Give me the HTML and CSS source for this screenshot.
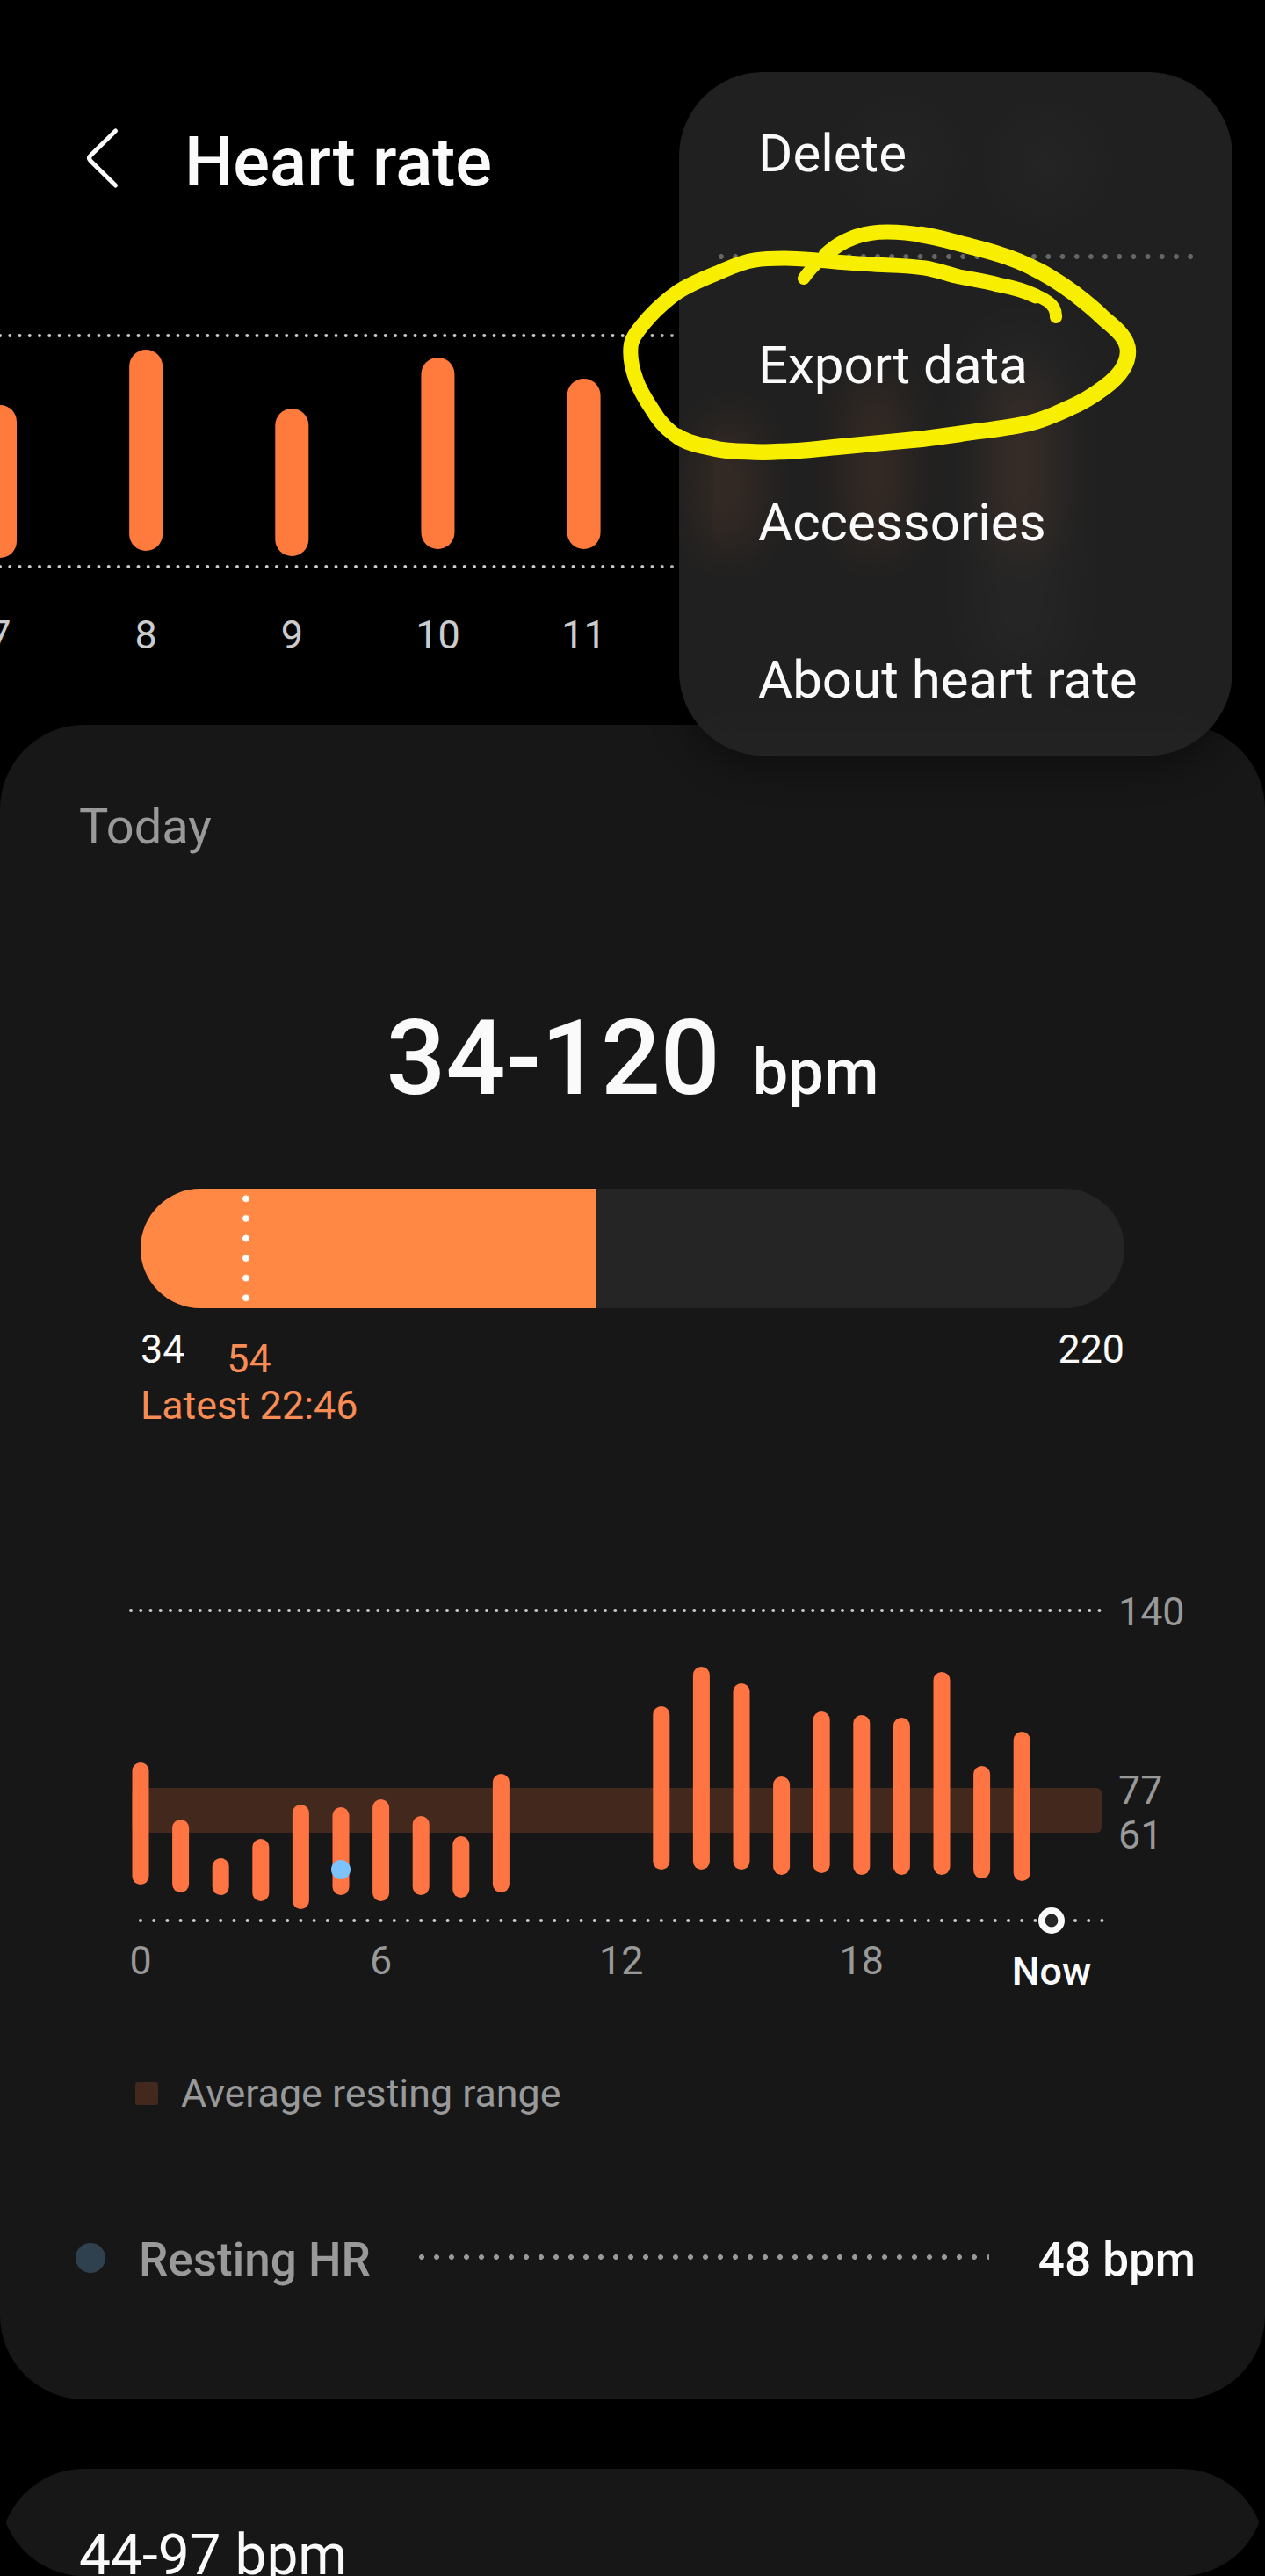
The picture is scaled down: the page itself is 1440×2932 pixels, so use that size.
FILE: index.html
```html
<!DOCTYPE html>
<html lang="en">
<head>
  <meta charset="UTF-8">
  <title>Heart rate</title>
  <link rel="stylesheet" href="styles.css">
</head>
<body>

  <div class="screen">
    <header class="header">
      <svg class="back" width="48" height="92" viewBox="0 0 48 92">
        <path d="M39.5 11 L11 39 Q8 42 11 45 L39.5 73" />
      </svg>
      <h1>Heart rate</h1>
    </header>

    <svg class="week" id="week" width="1440" height="485" viewBox="0 0 1440 485">
      <rect class="selected-day" x="1108" y="30" width="110" height="400" rx="55" />
      <line class="dots" x1="0" y1="42" x2="768" y2="42" />
      <line class="dots" x1="0" y1="305" x2="768" y2="305" />
    </svg>

    <section class="card">
      <div class="day">Today</div>

      <div class="value">34-120 <span class="unit">bpm</span></div>

      <div class="range">
        <div class="range-bar">
          <div class="range-fill"><div class="range-latest"></div></div>
        </div>
        <div class="range-labels">
          <span>34</span>
          <span class="latest-value">54</span>
          <span class="max">220</span>
        </div>
        <div class="latest">Latest 22:46</div>
      </div>

      <svg class="hours" id="hours" width="1260" height="480" viewBox="0 0 1260 480">
        <rect class="resting-range" x="60" y="235" width="1104" height="51" rx="6" />
        <line class="dots" x1="59" y1="33" x2="1163" y2="33" />
        <line class="dots axis" x1="70" y1="386" x2="1166" y2="386" />
        <text x="1183" y="50">140</text>
        <text x="1183" y="253">77</text>
        <text x="1183" y="304">61</text>
      </svg>

      <div class="legend"><span class="legend-box"></span>Average resting range</div>

      <div class="resting">
        <span class="resting-dot"></span>
        <span class="resting-name">Resting HR</span>
        <span class="leader"></span>
        <span class="resting-value">48 bpm</span>
      </div>
    </section>

    <section class="card next">
      <div class="summary">44-97 bpm</div>
    </section>

    <nav class="menu">
      <div class="menu-item">Delete</div>
      <div class="menu-divider"></div>
      <div class="menu-item">Export data</div>
      <div class="menu-item">Accessories</div>
      <div class="menu-item">About heart rate</div>
    </nav>

    <!-- marker circle round "Export data" -->
    <svg class="marker" width="620" height="300" viewBox="690 240 620 300">
      <path class="thin" d="M915 317 C922 306 932 297 944 287" />
      <path class="mid" d="M940 290 C958 273 980 264 1010 264 C1024 264 1036 265 1052 268" />
      <path class="thick" d="M1048 267 C1063 269 1077 273 1092 277 C1107 281 1121 284 1136 289 C1153 294 1169 301 1184 309 C1199 317 1211 325 1223 334 C1236 344 1247 353 1257 363 C1272 375 1284 386 1284 400 C1284 416 1272 430 1257 441 C1245 450 1232 458 1218 464 C1203 471 1187 478 1170 482 C1144 488 1118 490 1092 494 C1066 498 1040 501 1014 503 C993 505 972 507 951 509 C930 511 909 514 888 514 C875 515 862 515 850 514 C836 514 823 513 811 510 C796 507 782 504 772 497" />
      <path class="mid" d="M776 500 C760 491 750 479 743 467 C735 455 728 444 724 432 C719 418 717 408 718 396 C718 384 729 373 738 362 C749 350 759 341 772 332 C786 323 801 317 816 311 C830 305 844 298 859 296 C871 294 881 294 893 294 C909 294 926 296 942 297 C960 299 978 300 995 301 C1014 302 1034 302 1053 305 C1066 307 1079 312 1092 315 C1107 318 1122 320 1136 324 C1152 327 1167 331 1179 337" />
      <path class="thin" d="M1170 333 C1186 338 1203 345 1202 361" />
    </svg>
  </div>

  <script>
    const ns = "http://www.w3.org/2000/svg";

    function add(parent, name, attrs, text) {
      const el = document.createElementNS(ns, name);
      for (const key in attrs) {
        el.setAttribute(key, attrs[key]);
      }
      if (text !== undefined) el.textContent = text;
      parent.appendChild(el);
    }

    function addBar(parent, x, top, bottom, width) {
      add(parent, "rect", { class: "bar", x: x - width / 2, y: top, width: width, height: bottom - top, rx: width / 2 });
    }

    // [day, top, bottom]
    const days = [
      [7, 121, 295], [8, 58, 287], [9, 125, 293], [10, 67, 285], [11, 91, 285],
      [12, 140, 285], [13, 95, 285], [14, 95, 285]
    ];
    const week = document.getElementById("week");
    days.forEach(([day, top, bottom]) => {
      const x = (day - 7) * 166.15;
      addBar(week, x, top, bottom, 38);
      if (day < 12) add(week, "text", { x: x, y: 398 }, day);
    });

    // [hour, top, bottom]
    const hours = [
      [0, 206, 345], [1, 271, 354], [2, 315, 357], [3, 293, 364], [4, 254, 373],
      [5, 257, 357], [6, 248, 364], [7, 267, 357], [8, 290, 360], [9, 219, 354],
      [13, 142, 328], [14, 97, 328], [15, 116, 328], [16, 222, 334], [17, 148, 332],
      [18, 152, 334], [19, 155, 334], [20, 103, 334], [21, 210, 338], [22, 171, 341]
    ];
    const chart = document.getElementById("hours");
    const hourX = hour => 70 + hour * 45.6;
    hours.forEach(([hour, top, bottom]) => addBar(chart, hourX(hour), top, bottom, 19));
    [0, 6, 12, 18].forEach(hour => add(chart, "text", { class: "hour", x: hourX(hour), y: 447 }, hour));
    add(chart, "circle", { class: "lowest", cx: hourX(5), cy: 328, r: 11 });
    add(chart, "circle", { class: "now-dot", cx: 1107, cy: 386, r: 11.2 });
    add(chart, "text", { class: "hour now", x: 1107, y: 459 }, "Now");
  </script>

</body>
</html>
```
FILE: styles.css
```css
body {
  margin: 0;
  background: #000;
  color: #fafafa;
  font-family: Roboto, sans-serif;
}

.screen {
  position: relative;
  width: 1440px;
  height: 2932px;
  overflow: hidden;
  border-radius: 0 0 96px 96px;
}

.header {
  box-sizing: border-box;
  display: flex;
  gap: 70px;
  height: 340px;
  padding: 138px 92px 0;
}

.header h1 {
  margin: 0;
  font-size: 78px;
  font-weight: 500;
  line-height: 93px;
}

.back path {
  fill: none;
  stroke: #fafafa;
  stroke-width: 5;
  stroke-linecap: round;
}

.week,
.hours {
  display: block;
}

.week text {
  fill: #ccc;
  font-size: 45px;
  text-anchor: middle;
}

.week .bar {
  fill: #ff7b3d;
}

.selected-day {
  fill: #262626;
}

.dots {
  stroke: #ccc;
  stroke-width: 4;
  stroke-linecap: round;
  stroke-dasharray: 0 11.25;
}

.axis {
  stroke-dasharray: 0 15.2;
}

.card {
  box-sizing: border-box;
  height: 1906px;
  padding: 83px 90px 0;
  background: #171717;
  border-radius: 96px;
}

.day {
  color: #999;
  font-size: 56px;
  line-height: 66px;
}

.value {
  display: flex;
  justify-content: center;
  align-items: baseline;
  gap: 37px;
  height: 140px;
  margin-top: 160px;
  font-size: 119.5px;
  font-weight: 500;
  line-height: 140px;
}

.unit {
  font-size: 72px;
  line-height: 84px;
}

.range {
  margin: 79px 70px 0;
  font-size: 44.8px;
  line-height: 52px;
}

.range-bar {
  height: 136px;
  background: #252525;
  border-radius: 68px;
  overflow: hidden;
}

.range-fill {
  width: 518px;
  height: 136px;
  background: #ff8844;
}

.range-latest {
  width: 8px;
  height: 136px;
  margin-left: 116px;
  background: radial-gradient(circle, #fff 3.6px, transparent 4.2px) 0 0 / 8px 22.6px;
}

.range-labels {
  display: flex;
  height: 63px;
  margin-top: 21px;
}

.latest-value {
  margin: 11px 0 0 48px;
  color: #f98c55;
}

.max {
  margin-left: auto;
}

.latest {
  margin-top: 1px;
  color: #f98c55;
}

.hours {
  margin-top: 174px;
}

.hours text {
  fill: #999;
  font-size: 44.8px;
}

.hours .bar {
  fill: #ff7443;
}

.hours .hour {
  text-anchor: middle;
}

.hours .now {
  fill: #fafafa;
  font-weight: 500;
}

.resting-range {
  fill: #43291d;
}

.lowest {
  fill: #7dc4ff;
}

.now-dot {
  fill: #252525;
  stroke: #fafafa;
  stroke-width: 7.6;
}

.legend {
  display: flex;
  align-items: center;
  gap: 26px;
  margin: 77px 0 0 64px;
  color: #999;
  font-size: 44.8px;
  line-height: 52px;
}

.legend-box {
  width: 26px;
  height: 26px;
  background: #43291d;
  border-radius: 3px;
}

.resting {
  display: flex;
  align-items: center;
  margin: 132px -11px 0 -4px;
  font-size: 53px;
  font-weight: 500;
  line-height: 62px;
}

.resting-dot {
  width: 34px;
  height: 34px;
  margin: 0 38px 4px 0;
  background: #2f414f;
  border-radius: 50%;
}

.resting-name {
  color: #999;
}

.leader {
  flex: 1;
  height: 6px;
  margin: 0 56px 6px 55px;
  background: radial-gradient(circle at 3px 3px, #999 2.6px, transparent 3.2px) 0 0 / 17px 6px;
}

.next {
  height: 300px;
  margin-top: 79px;
  padding-top: 61px;
}

.summary {
  font-size: 64px;
  line-height: 76px;
}

.menu {
  position: absolute;
  top: 82px;
  left: 773px;
  box-sizing: border-box;
  width: 630px;
  height: 778px;
  padding-top: 57px;
  background:
    radial-gradient(circle at 252px 100px, rgba(255, 255, 255, 0.02), transparent 80px),
    radial-gradient(circle at 417px 105px, rgba(255, 255, 255, 0.02), transparent 80px),
    rgba(38, 38, 38, 0.85);
  backdrop-filter: blur(30px);
  border-radius: 96px;
  box-shadow: 0 12px 40px rgba(0, 0, 0, 0.4);
}

.menu-item {
  height: 179px;
  padding-left: 90px;
  font-size: 60px;
  line-height: 71px;
}

.menu-divider {
  height: 6px;
  margin: -29px 39px 85px 45px;
  background: radial-gradient(circle at 3px 3px, #666 2.6px, transparent 3.2px) 0 0 / 16.2px 6px;
}

.marker {
  position: absolute;
  top: 240px;
  left: 690px;
}

.marker path {
  fill: none;
  stroke: #f8ee00;
  stroke-linecap: round;
  stroke-linejoin: round;
}

.marker .thin {
  stroke-width: 14;
}

.marker .mid {
  stroke-width: 17;
}

.marker .thick {
  stroke-width: 18.5;
}
```
